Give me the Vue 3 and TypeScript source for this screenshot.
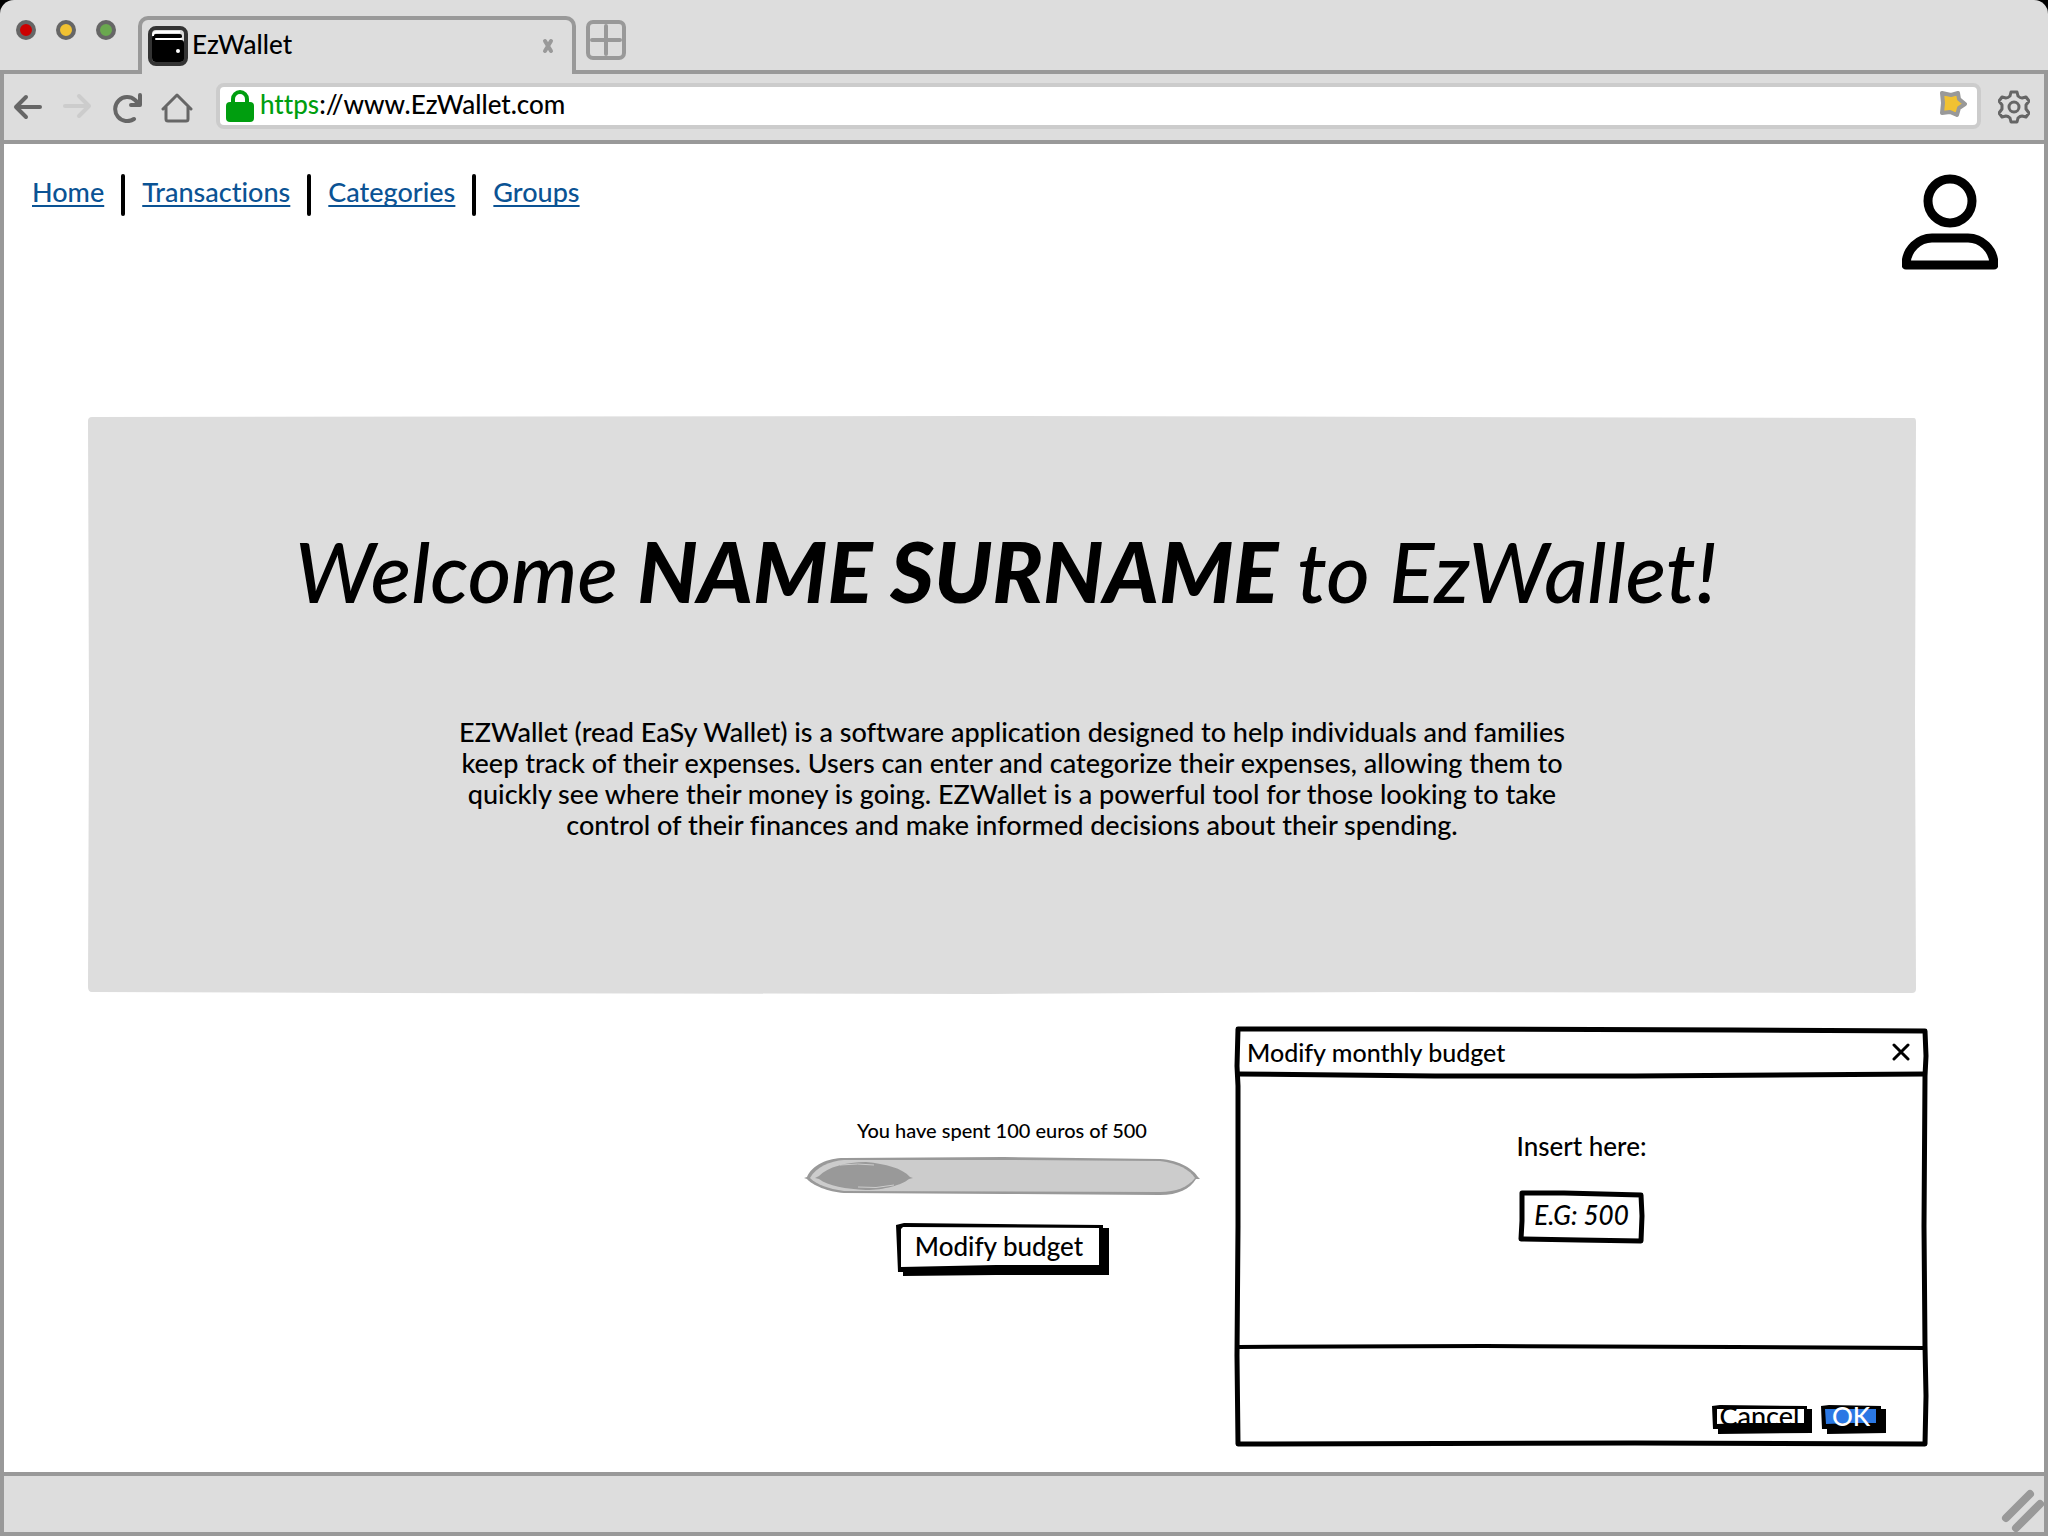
<script setup lang="ts">
import { computed, ref } from 'vue'

const links: string[] = ['Home', 'Transactions', 'Categories', 'Groups']
const lights: string[] = ['#cc0000', '#f1c232', '#6aa84f']
const address = ref('://www.EzWallet.com')
const spent = ref(100)
const limit = ref(500)
const amount = ref('')
const dialogOpen = ref(true)
const summary = computed(() => `You have spent ${spent.value} euros of ${limit.value}`)

function save(): void {
  const next = Number(amount.value)
  if (next > 0) limit.value = next
  dialogOpen.value = false
}
</script>

<template>
  <div class="browser">
    <header class="strip">
      <div class="lights">
        <span v-for="c in lights" :key="c" class="light" :style="{ background: c }"></span>
      </div>
      <div class="tab">
        <svg class="favicon" viewBox="0 0 40 40" aria-hidden="true">
          <rect x="2" y="2" width="36" height="36" rx="6" fill="#ddd" stroke="#333" stroke-width="4" />
          <path d="M4 12Q4 8 8 8H32Q34 8 34 10V11Q34 12 32 12H8V14H33Q36 14 36 17V33Q36 36 32 36H8Q4 36 4 32Z" fill="#000" />
          <path d="M5 10Q5 6 9 6H32" fill="none" stroke="#fff" stroke-width="2" />
          <path d="M8 13H33" stroke="#fff" stroke-width="2" stroke-linecap="round" />
          <circle cx="30" cy="25" r="2" fill="#fff" />
        </svg>
        <span class="tab-title">EzWallet</span>
        <button class="plain tab-close" type="button" aria-label="Close tab">
          <svg viewBox="0 0 12 16" width="12" height="16"><path d="M3 3L9 13M9 3L3 13" stroke="#999" stroke-width="4" stroke-linecap="round" /></svg>
        </button>
      </div>
      <button class="plain new-tab" type="button" aria-label="New tab">
        <svg viewBox="0 0 40 40" width="40" height="40" fill="none" stroke="#999" stroke-width="4" stroke-linecap="round">
          <rect x="2" y="2" width="36" height="36" rx="5" /><path d="M20 6V34M6 20H34" />
        </svg>
      </button>
    </header>

    <div class="toolbar">
      <button class="plain" type="button" aria-label="Back">
        <svg viewBox="0 0 32 32" width="32" height="32" fill="none" stroke="#666" stroke-width="4" stroke-linecap="round" stroke-linejoin="round"><path d="M28 16H4M14 6L4 16L14 26" /></svg>
      </button>
      <button class="plain" type="button" aria-label="Forward">
        <svg viewBox="0 0 32 32" width="32" height="32" fill="none" stroke="#ccc" stroke-width="4" stroke-linecap="round" stroke-linejoin="round"><path d="M4 15H28M18 5L28 15L18 25" /></svg>
      </button>
      <button class="plain" type="button" aria-label="Reload">
        <svg viewBox="0 0 32 32" width="32" height="32" fill="none" stroke="#666" stroke-width="4" stroke-linecap="round" stroke-linejoin="round"><path d="M24 28A12 12 0 1 1 25 9L29 13" /><path d="M30 4V14H21" /></svg>
      </button>
      <button class="plain" type="button" aria-label="Home page">
        <svg viewBox="0 0 34 32" width="34" height="32" fill="none" stroke="#666" stroke-width="3" stroke-linecap="round" stroke-linejoin="round"><path d="M4 18L18 4L32 18M7 16V28Q7 30 9 30H27Q29 30 29 28V16" /></svg>
      </button>
      <label class="address">
        <svg viewBox="0 0 28 32" width="28" height="32" aria-hidden="true">
          <rect y="12" width="28" height="20" rx="4" fill="#009e0f" />
          <path d="M7 14V9A7 7 0 0 1 21 9V14" fill="none" stroke="#009e0f" stroke-width="4" />
        </svg>
        <span class="scheme">https</span>
        <input v-model="address" type="text" aria-label="Address" />
        <svg class="star" viewBox="0 0 28 28" width="28" height="28" aria-hidden="true">
          <path d="M3 3L12 5L19 3L20 9L26 14L20 18L18 25L11 22L3 23L4 13Z" fill="#f1c232" stroke="#999" stroke-width="4" stroke-linejoin="round" />
        </svg>
      </label>
      <button class="plain" type="button" aria-label="Settings">
        <svg viewBox="0 0 32 34" width="32" height="34" fill="none" stroke="#666" stroke-width="3" stroke-linejoin="round">
          <path d="M13 2H19L20 6Q22 8 24 8L28 7L31 11L28 15V19L31 23L28 27L24 26Q22 26 20 28L19 32H13L12 28Q10 26 8 26L4 27L1 23L4 19V15L1 11L4 7L8 8Q10 8 12 6Z" />
          <circle cx="16" cy="17" r="5" />
        </svg>
      </button>
    </div>

    <main class="page">
      <div class="top">
        <nav class="nav">
          <template v-for="(name, i) in links" :key="name">
            <span v-if="i" class="bar"></span>
            <a href="#">{{ name }}</a>
          </template>
        </nav>
        <button class="plain" type="button" aria-label="Account">
          <svg viewBox="0 0 96 96" width="96" height="96" fill="none" stroke="#000" stroke-width="9" stroke-linejoin="round">
            <circle cx="48" cy="27" r="22" />
            <path d="M4 91C4 75 17 64 30 64H66C79 64 92 75 92 91Z" />
          </svg>
        </button>
      </div>

      <section class="hero">
        <svg class="sketch" viewBox="0 0 1828 577" preserveAspectRatio="none" aria-hidden="true">
          <path d="M0 4Q0 0 4 0L900 -1L1826 1Q1828 1 1828 5L1827 300L1828 572Q1828 576 1824 576L1300 575L900 577L300 576L4 575Q0 575 0 570L1 300Z" fill="#ddd" />
        </svg>
        <h1>Welcome <strong>NAME SURNAME</strong> to EzWallet!</h1>
        <p>
          EZWallet (read EaSy Wallet) is a software application designed to help individuals and families<br />
          keep track of their expenses. Users can enter and categorize their expenses, allowing them to<br />
          quickly see where their money is going. EZWallet is a powerful tool for those looking to take<br />
          control of their finances and make informed decisions about their spending.
        </p>
      </section>

      <div class="lower">
        <section class="budget">
          <p class="summary">{{ summary }}</p>
          <svg class="meter" viewBox="0 0 396 38" preserveAspectRatio="none" role="progressbar" :aria-valuenow="spent" :aria-valuemax="limit" aria-label="Budget spent">
            <path d="M0 21L3 20C8 8 24 1 40 1L200 0L356 2C376 3 390 13 394 20L396 22L392 22C386 32 374 38 356 38L200 37L40 36C24 35 8 28 3 22Z" fill="#999" />
            <path d="M6 21C12 10 26 4 40 3H200L356 4C374 6 386 13 391 21C384 30 372 35 356 35L40 34C24 32 12 27 6 21Z" fill="#ccc" />
            <path d="M11 21L15 19C24 10 42 5 62 5C82 7 98 11 106 20L109 21L105 22C98 28 80 33 62 33C42 32 24 29 15 22Z" fill="#999" />
            <path d="M36 8Q54 6 70 8M54 30Q72 32 90 28" fill="none" stroke="#ccc" stroke-width="1" />
          </svg>
          <button class="plain modify" type="button" @click="dialogOpen = true">
            <svg class="sketch" viewBox="0 0 213 52" preserveAspectRatio="none" aria-hidden="true">
              <path d="M0 2L8 0L100 1L207 2V5H213V52H100L7 53V49H2L1 25Z" fill="#000" />
              <path d="M5 6L7 4L203 5V42L100 42L5 44Z" fill="#fff" />
            </svg>
            <span>Modify budget</span>
          </button>
        </section>

        <form v-if="dialogOpen" class="dialog" @submit.prevent="save">
          <svg class="sketch" viewBox="0 0 693 421" preserveAspectRatio="none" aria-hidden="true" fill="none" stroke="#000" stroke-linejoin="round">
            <path d="M3 3L200 3L500 4L690 5L691 30L690 50L689 200L690 320L691 370L690 418L400 417L3 418L2 330L3 200L3 60L2 40Z" stroke-width="5" />
            <path d="M3 48L200 50L400 50L690 48" stroke-width="5" />
            <path d="M3 321L250 320L500 321L690 322" stroke-width="4" />
          </svg>
          <div class="dialog-head">
            <h2>Modify monthly budget</h2>
            <button class="plain" type="button" aria-label="Close dialog" @click="dialogOpen = false">
              <svg viewBox="0 0 18 18" width="18" height="18"><path d="M2 2L16 16M16 2L2 16" stroke="#000" stroke-width="3" stroke-linecap="round" /></svg>
            </button>
          </div>
          <div class="dialog-body">
            <label for="amount">Insert here:</label>
            <div class="field">
              <svg class="sketch" viewBox="0 0 125 52" preserveAspectRatio="none" aria-hidden="true">
                <path d="M3 2L45 2L122 4L123 25L122 50L60 49L2 48L3 30Z" fill="#fff" stroke="#000" stroke-width="5" stroke-linejoin="round" />
              </svg>
              <input id="amount" v-model="amount" type="text" placeholder="E.G: 500" />
            </div>
          </div>
          <div class="dialog-foot">
            <button class="plain small cancel" type="button" @click="dialogOpen = false">
              <svg class="sketch" viewBox="0 0 100 29" preserveAspectRatio="none" aria-hidden="true">
                <path d="M0 1L8 0L95 1V4H100V28L6 29V24H1Z" fill="#000" />
                <path d="M5 4H92V18L30 18L5 19Z" fill="#fff" />
              </svg>
              <span>Cancel</span>
            </button>
            <button class="plain small ok" type="submit">
              <svg class="sketch" viewBox="0 0 65 29" preserveAspectRatio="none" aria-hidden="true">
                <path d="M0 1L8 0L60 1V4H65V28L6 29V24H1Z" fill="#000" />
                <path d="M4 4H55V18L30 18L5 19Z" fill="#2b78e4" />
              </svg>
              <span>OK</span>
            </button>
          </div>
        </form>
      </div>
    </main>

    <footer class="status">
      <svg viewBox="0 0 44 44" width="44" height="44" stroke="#999" stroke-width="8" stroke-linecap="round" aria-hidden="true">
        <path d="M6 30L30 6M16 40L40 16" />
      </svg>
    </footer>
  </div>
</template>

<style>
body {
  background: #000;
}
</style>

<style scoped>
.browser {
  box-sizing: border-box;
  display: flex;
  flex-direction: column;
  min-height: 100vh;
  background: #ddd;
  border-radius: 14px 14px 0 0;
  color: #000;
  font: 500 26px/32px Lato, "Open Sans", sans-serif;
  font-variant-ligatures: none;
}
.plain {
  display: block;
  padding: 0;
  border: 0;
  background: none;
  color: inherit;
  font: inherit;
  cursor: pointer;
}
svg {
  display: block;
  flex: none;
}
.sketch {
  position: absolute;
  inset: 0;
  width: 100%;
  height: 100%;
  overflow: visible;
}
.strip {
  display: flex;
  align-items: flex-start;
  height: 70px;
  border-bottom: 4px solid #999;
}
.lights {
  display: flex;
  gap: 20px;
  padding: 20px 22px 0 16px;
}
.light {
  box-sizing: border-box;
  width: 20px;
  height: 20px;
  border: 4px solid #666;
  border-radius: 50%;
}
.tab {
  box-sizing: border-box;
  display: flex;
  align-items: center;
  width: 438px;
  height: 58px;
  margin-top: 16px;
  padding: 0 18px 2px 6px;
  background: #ddd;
  border: 4px solid #999;
  border-bottom: 0;
  border-radius: 10px 10px 0 0;
}
.favicon {
  width: 40px;
  height: 40px;
}
.tab-title {
  flex: 1;
  padding: 0 0 4px 4px;
}
.new-tab {
  margin: 20px 0 0 10px;
}
.toolbar {
  display: flex;
  align-items: center;
  gap: 17px;
  height: 66px;
  padding: 0 14px 0 8px;
  border: 4px solid #999;
  border-top: 0;
}
.address {
  box-sizing: border-box;
  display: flex;
  flex: 1;
  align-items: center;
  height: 46px;
  margin: 0 0 2px 6px;
  padding: 0 10px 0 6px;
  background: #fff;
  border: 4px solid #ccc;
  border-radius: 8px;
}
.scheme {
  padding: 0 0 4px 6px;
  color: #009e0f;
}
input {
  min-width: 0;
  padding: 0;
  border: 0;
  outline: 0;
  background: none;
  color: inherit;
  font: inherit;
}
.address input {
  flex: 1;
  padding-bottom: 4px;
}
.star {
  margin-bottom: 4px;
}
.page {
  flex: 1;
  padding: 30px 0 24px;
  background: #fff;
  border: solid #999;
  border-width: 0 4px;
}
.top {
  display: flex;
  justify-content: space-between;
  padding: 0 46px 0 28px;
}
.nav {
  display: flex;
  gap: 17px;
  height: 42px;
  font-size: 27px;
  line-height: 36px;
}
.nav a {
  color: #0b5394;
  text-decoration-thickness: 2px;
  text-decoration-skip-ink: none;
  text-underline-offset: 3px;
}
.bar {
  width: 4px;
  background: #000;
  border-radius: 2px;
}
.hero {
  position: relative;
  margin: 147px 128px 0 84px;
  padding: 106px 0 154px;
  text-align: center;
}
h1 {
  position: relative;
  margin: 0;
  padding-left: 8px;
  font-size: 84px;
  font-style: italic;
  font-weight: 500;
  line-height: 96px;
}
h1 strong {
  font-weight: 900;
}
.hero p {
  position: relative;
  margin: 97px 0 0;
  padding-left: 20px;
  font-size: 27px;
  line-height: 31px;
}
.lower {
  display: flex;
  justify-content: flex-end;
  gap: 35px;
  margin-top: 32px;
  padding-right: 116px;
}
.budget {
  display: flex;
  flex-direction: column;
  align-items: center;
  width: 396px;
  padding-top: 92px;
}
.summary {
  margin: 0 0 15px;
  font-size: 20px;
  line-height: 24px;
}
.meter {
  width: 100%;
  height: 38px;
}
.modify {
  position: relative;
  width: 213px;
  height: 52px;
  margin-top: 28px;
  padding: 0 6px 6px 0;
}
.modify span,
.small span {
  position: relative;
}
.dialog {
  position: relative;
  display: flex;
  flex-direction: column;
  width: 693px;
}
.dialog-head {
  position: relative;
  display: flex;
  align-items: center;
  justify-content: space-between;
  height: 51px;
  padding: 0 18px 0 12px;
}
h2 {
  margin: 0;
  font: inherit;
  font-size: 25px;
}
.dialog-body {
  position: relative;
  display: flex;
  flex-direction: column;
  align-items: center;
  gap: 29px;
  min-height: 215px;
  padding-top: 53px;
}
.field {
  position: relative;
  width: 125px;
  height: 52px;
}
.field input {
  position: relative;
  width: 100%;
  height: 48px;
  text-align: center;
}
.field input::placeholder {
  color: #000;
  font-style: italic;
  opacity: 1;
}
.dialog-foot {
  display: flex;
  justify-content: flex-end;
  gap: 9px;
  padding: 60px 42px 13px 0;
}
.small {
  position: relative;
  height: 29px;
  padding: 0 5px 7px 0;
  line-height: 22px;
}
.cancel {
  width: 100px;
  font-size: 27px;
}
.ok {
  width: 65px;
  color: #fff;
}
.status {
  display: flex;
  align-items: flex-end;
  justify-content: flex-end;
  height: 56px;
  border: 4px solid #999;
}
</style>
